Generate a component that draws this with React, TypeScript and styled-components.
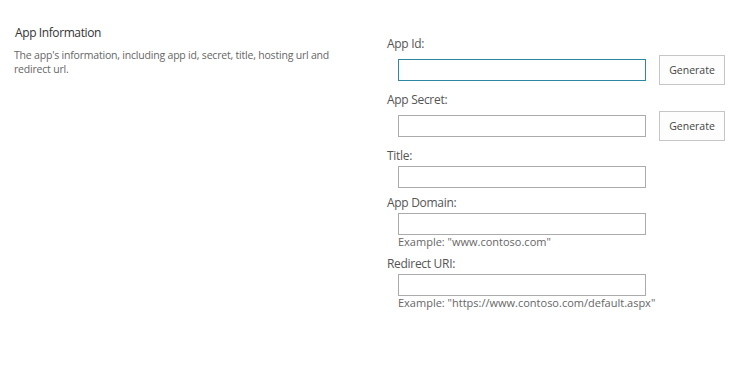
import React from "react";
import styled, { createGlobalStyle } from "styled-components";

const Global = createGlobalStyle`
  html, body { margin: 0; padding: 0; background: #fff; }
  body { font-family: "Open Sans", "Liberation Sans", sans-serif; }
`;

const Page = styled.div`
  display: flex;
  align-items: flex-start;
  width: 753px;
  height: 365px;
  background: #fff;
`;

const Description = styled.section`
  width: 358px;
  padding: 24px 0 0 14px;
  box-sizing: content-box;
  flex-shrink: 0;
`;

const Heading = styled.h2`
  margin: 0 0 6px 1px;
  font-size: 12px;
  letter-spacing: -0.4px;
  line-height: 18px;
  font-weight: 400;
  color: #333;
`;

const Text = styled.p`
  margin: 0;
  font-size: 10.5px;
  letter-spacing: -0.2px;
  line-height: 14px;
  color: #666;
  width: 330px;
`;

const Form = styled.div`
  display: flex;
  flex-direction: column;
  padding: 34px 0 0 15px;
`;

const Field = styled.div`
  display: flex;
  flex-direction: column;
  margin-bottom: 5px;
`;

const Label = styled.label`
  font-size: 12px;
  letter-spacing: -0.3px;
  line-height: 19px;
  height: 19px;
  color: #555;
`;

const Controls = styled.div<{ $withButton?: boolean }>`
  display: flex;
  align-items: center;
  padding: ${(p) => (p.$withButton ? "2px" : "1px")} 0 0 11px;
`;

const Input = styled.input<{ $focused?: boolean }>`
  width: 248px;
  height: 22px;
  box-sizing: border-box;
  margin: 0;
  padding: 0 4px;
  border: 1px solid ${(p) => (p.$focused ? "#2b88a0" : "#ababab")};
  background: #fff;
  outline: none;
  font-family: inherit;
  font-size: 12px;
`;

const Button = styled.button`
  width: 66px;
  height: 30px;
  margin-left: 13px;
  box-sizing: border-box;
  border: 1px solid #c6c6c6;
  background: #fdfdfd;
  color: #444;
  font-family: inherit;
  font-size: 10.5px;
  padding: 0;
`;

const Hint = styled.div`
  padding-left: 11px;
  font-size: 11px;
  line-height: 14px;
  color: #666;
`;

export default function App() {
  return (
    <>
      <Global />
      <Page>
        <Description>
          <Heading>App Information</Heading>
          <Text>
            The app's information, including app id, secret, title, hosting url and redirect url.
          </Text>
        </Description>
        <Form>
          <Field>
            <Label>App Id:</Label>
            <Controls $withButton>
              <Input $focused />
              <Button>Generate</Button>
            </Controls>
          </Field>
          <Field>
            <Label>App Secret:</Label>
            <Controls $withButton>
              <Input />
              <Button>Generate</Button>
            </Controls>
          </Field>
          <Field>
            <Label>Title:</Label>
            <Controls>
              <Input />
            </Controls>
          </Field>
          <Field>
            <Label>App Domain:</Label>
            <Controls>
              <Input />
            </Controls>
            <Hint>Example: "www.contoso.com"</Hint>
          </Field>
          <Field>
            <Label>Redirect URI:</Label>
            <Controls>
              <Input />
            </Controls>
            <Hint>Example: "https://www.contoso.com/default.aspx"</Hint>
          </Field>
        </Form>
      </Page>
    </>
  );
}
